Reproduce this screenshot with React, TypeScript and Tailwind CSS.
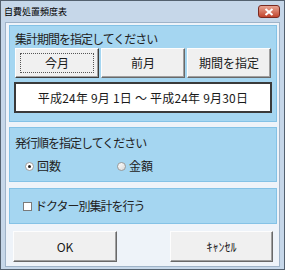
const font = "font-['MS_UI_Gothic','Noto_Sans_CJK_JP',sans-serif]";

function Btn({ label, focus }: { label: string; focus?: boolean }) {
  return (
    <div
      className={
        "h-full bg-[#f0f0f0] border border-t-[#fdfdfd] border-l-[#fdfdfd] flex items-center justify-center text-[12px] text-[#1a1a1a] " +
        (focus
          ? "border-r-[#3c3c3c] border-b-[#3c3c3c] shadow-[inset_-1px_-1px_0_#a0a0a0]"
          : "border-r-[#696969] border-b-[#696969] shadow-[inset_-1px_-1px_0_#a0a0a0]")
      }
    >
      {focus ? (
        <div className="w-[calc(100%-8px)] h-[calc(100%-8px)] border border-dotted border-[#555] flex items-center justify-center">
          {label}
        </div>
      ) : (
        label
      )}
    </div>
  );
}

export default function App() {
  return (
    <div className={"w-[285px] h-[270px] bg-[#c6d7e9] border border-[#54616f] flex flex-col " + font}>
      {/* title bar */}
      <div className="h-[21px] flex items-center justify-between pl-[3px] pr-[4px] shrink-0">
        <span className="text-[9px] text-black">自費処置頻度表</span>
        <div className="w-[22px] h-[13px] rounded-[3px] bg-gradient-to-b from-[#e8a493] to-[#c1432c] border border-[#7a2a20] flex items-center justify-center">
          <svg width="10" height="8" viewBox="0 0 10 8">
            <path d="M1.5 1 L8.5 7 M8.5 1 L1.5 7" stroke="#fff" strokeWidth="2" />
          </svg>
        </div>
      </div>

      {/* client */}
      <div className="flex-1 mx-[4px] mb-[2px] bg-[#eef3f9] border border-[#9fb3c8] flex flex-col pt-[2px] pl-[3px] pr-[2px]">
        <div className="h-[97px] bg-[#a5d6f1] border border-[#84c2e6] px-[5px] pt-[5px] flex flex-col">
          <div className="h-[16px] flex items-center text-[12px] tracking-[-1px] text-[#222]">
            集計期間を指定してください
          </div>
          <div className="h-[30px] mt-[1px] grid grid-cols-3 gap-[2px]">
            <Btn label="今月" focus />
            <Btn label="前月" />
            <Btn label="期間を指定" />
          </div>
          <div className="h-[31px] mt-[4px] -mx-[1px] bg-white border-2 border-[#3a3a3a] flex items-center justify-center text-[12px] tracking-[0.2px] text-[#1a1a1a] whitespace-pre">
            平成24年 9月 1日 ～ 平成24年 9月30日
          </div>
        </div>

        <div className="h-[55px] mt-[5px] bg-[#a5d6f1] border border-[#84c2e6] pl-[5px] pt-[7px] flex flex-col">
          <div className="h-[16px] flex items-center text-[12px] tracking-[-1px] text-[#222]">
            発行順を指定してください
          </div>
          <div className="h-[18px] mt-[6px] flex items-center text-[12px] text-[#222]">
            <div className="flex items-center w-[102px] pl-[10px]">
              <span className="w-[9px] h-[9px] rounded-full bg-white border border-[#9a9a9a] flex items-center justify-center mr-[3px]">
                <span className="w-[3px] h-[3px] rounded-full bg-[#222]" />
              </span>
              回数
            </div>
            <div className="flex items-center">
              <span className="w-[9px] h-[9px] rounded-full bg-gradient-to-br from-[#ffffff] to-[#d8d8d8] border border-[#9a9a9a] mr-[3px]" />
              金額
            </div>
          </div>
        </div>

        <div className="h-[36px] mt-[6px] bg-[#a5d6f1] border border-[#84c2e6] pl-[13px] flex items-center text-[12px] tracking-[-1px] text-[#222]">
          <span className="w-[9px] h-[9px] bg-white border border-[#7a7a7a] mr-[3px]" />
          ドクター別集計を行う
        </div>

        <div className="h-[31px] mt-[7px] flex justify-between pl-[4px] pr-[4px]">
          <div className="w-[104px]">
            <Btn label="OK" />
          </div>
          <div className="w-[103px]">
            <Btn label="ｷｬﾝｾﾙ" />
          </div>
        </div>
      </div>
    </div>
  );
}
